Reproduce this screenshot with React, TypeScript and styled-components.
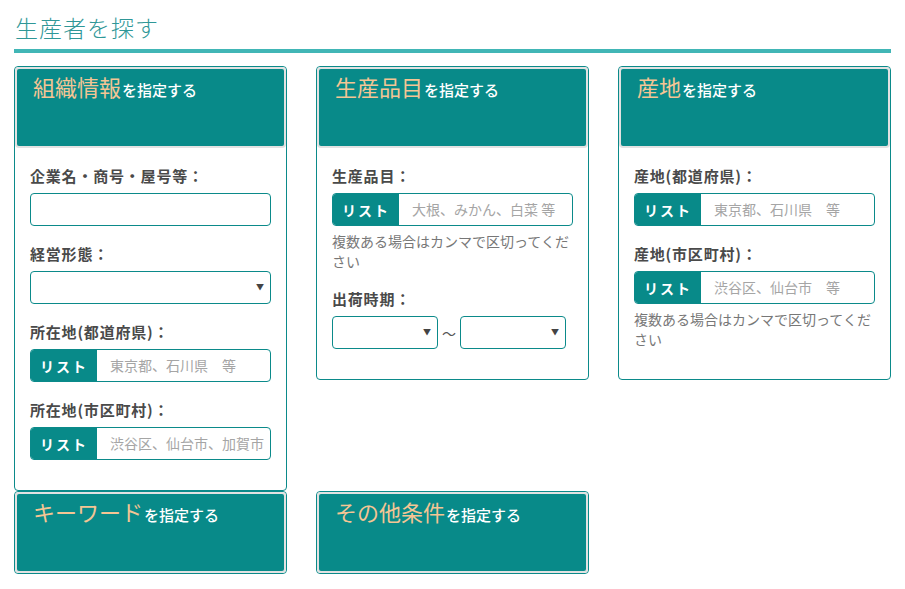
import React from 'react';
import styled, { createGlobalStyle } from 'styled-components';

const GlobalStyle = createGlobalStyle`
  body {
    margin: 0;
    background: #fff;
    font-family: 'Noto Sans CJK JP', 'Noto Sans', sans-serif;
    color: #444;
  }
`;

const Page = styled.div`
  padding: 12px 14px 0 14px;
  width: 877px;
`;

const PageTitle = styled.h1`
  margin: 0;
  padding: 0 0 7px 1px;
  font-size: 23px;
  font-weight: 300;
  line-height: 30px;
  color: #2f9797;
  letter-spacing: 1px;
  border-bottom: 4px solid #41b6b6;
`;

const Cards = styled.div`
  display: flex;
  flex-wrap: wrap;
  align-items: flex-start;
  column-gap: 29px;
  margin-top: 13px;
`;

const Card = styled.section`
  width: 273px;
  box-sizing: border-box;
  border: 1px solid #0b8a8a;
  border-radius: 4px;
  background: #fff;
`;

const CardHeader = styled.div`
  height: 81px;
  box-sizing: border-box;
  border: 2px solid #e2e2e2;
  border-radius: 4px;
  background: #088a89;
  padding: 3px 16px;
  line-height: 28px;
  color: #fff;
`;

const HeadMain = styled.span`
  font-size: 22px;
  color: #f4c594;
  font-weight: 400;
`;

const HeadSub = styled.span`
  font-size: 15px;
  font-weight: 500;
  color: #fff;
  margin-left: 1px;
`;

const CardBody = styled.div`
  padding: 18px 15px 12px;
`;

const Group = styled.div`
  margin-bottom: 18px;
`;

const Label = styled.div`
  font-size: 15px;
  font-weight: 700;
  line-height: 20px;
  letter-spacing: 0.8px;
  color: #4a4a4a;
  margin-bottom: 7px;
`;

const TextInput = styled.div`
  height: 33px;
  box-sizing: border-box;
  border: 1px solid #0b8a8a;
  border-radius: 4px;
`;

const InputGroup = styled.div`
  display: flex;
  height: 33px;
  box-sizing: border-box;
  border: 1px solid #0b8a8a;
  border-radius: 4px;
  overflow: hidden;
`;

const ListButton = styled.div`
  width: 66px;
  flex: none;
  background: #088a89;
  color: #fff;
  font-size: 14px;
  font-weight: 700;
  letter-spacing: 2px;
  display: flex;
  align-items: center;
  justify-content: center;
`;

const Placeholder = styled.div`
  flex: 1;
  padding-left: 13px;
  font-size: 14px;
  color: #a5a5a5;
  line-height: 31px;
  white-space: nowrap;
  overflow: hidden;
`;

const Select = styled.div<{ $width?: number }>`
  position: relative;
  height: 33px;
  box-sizing: border-box;
  border: 1px solid #0b8a8a;
  border-radius: 4px;
  width: ${(p) => (p.$width ? `${p.$width}px` : '100%')};

  &::after {
    content: '▼';
    position: absolute;
    right: 6px;
    top: 9px;
    font-size: 8px;
    color: #444;
  }
`;

const Help = styled.div`
  margin-top: 5px;
  font-size: 14px;
  line-height: 20px;
  color: #777;
`;

const Range = styled.div`
  display: flex;
  align-items: center;
  gap: 4px;
`;

const Tilde = styled.span`
  font-size: 14px;
  color: #555;
`;

const Header = ({ main, sub = 'を指定する' }: { main: string; sub?: string }) => (
  <CardHeader>
    <HeadMain>{main}</HeadMain>
    <HeadSub>{sub}</HeadSub>
  </CardHeader>
);

const ListInput = ({ placeholder }: { placeholder: string }) => (
  <InputGroup>
    <ListButton>リスト</ListButton>
    <Placeholder>{placeholder}</Placeholder>
  </InputGroup>
);

const App = () => (
  <Page>
    <GlobalStyle />
    <PageTitle>生産者を探す</PageTitle>
    <Cards>
      <Card>
        <Header main='組織情報' />
        <CardBody>
          <Group>
            <Label>企業名・商号・屋号等：</Label>
            <TextInput />
          </Group>
          <Group>
            <Label>経営形態：</Label>
            <Select />
          </Group>
          <Group>
            <Label>所在地(都道府県)：</Label>
            <ListInput placeholder='東京都、石川県　等' />
          </Group>
          <Group>
            <Label>所在地(市区町村)：</Label>
            <ListInput placeholder='渋谷区、仙台市、加賀市' />
          </Group>
        </CardBody>
      </Card>

      <Card>
        <Header main='生産品目' />
        <CardBody>
          <Group>
            <Label>生産品目：</Label>
            <ListInput placeholder='大根、みかん、白菜 等' />
            <Help>複数ある場合はカンマで区切ってください</Help>
          </Group>
          <Group>
            <Label>出荷時期：</Label>
            <Range>
              <Select $width={106} />
              <Tilde>〜</Tilde>
              <Select $width={106} />
            </Range>
          </Group>
        </CardBody>
      </Card>

      <Card>
        <Header main='産地' />
        <CardBody>
          <Group>
            <Label>産地(都道府県)：</Label>
            <ListInput placeholder='東京都、石川県　等' />
          </Group>
          <Group>
            <Label>産地(市区町村)：</Label>
            <ListInput placeholder='渋谷区、仙台市　等' />
            <Help>複数ある場合はカンマで区切ってください</Help>
          </Group>
        </CardBody>
      </Card>

      <Card>
        <Header main='キーワード' />
      </Card>

      <Card>
        <Header main='その他条件' />
      </Card>
    </Cards>
  </Page>
);

export default App;
